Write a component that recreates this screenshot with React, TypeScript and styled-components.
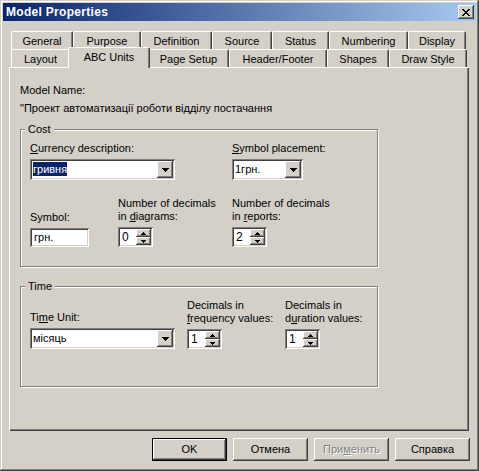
import React from 'react';
import styled, { createGlobalStyle } from 'styled-components';

const face = '#d4d0c8';
const light = '#ffffff';
const shadow = '#808080';
const dark = '#404040';

const raised = `box-shadow: inset -1px -1px ${dark}, inset 1px 1px ${light}, inset -2px -2px ${shadow}, inset 2px 2px ${face};`;
const sunken = `box-shadow: inset 1px 1px ${shadow}, inset -1px -1px ${light}, inset 2px 2px ${dark}, inset -2px -2px ${face};`;

const GlobalStyle = createGlobalStyle`
	body {
		margin: 0;
		background: ${face};
		font-family: 'Liberation Sans', Arial, sans-serif;
		font-size: 11px;
		color: #000;
	}
	* {
		box-sizing: border-box;
	}
`;

const rowOne = [
	{ label: 'General', width: 62 },
	{ label: 'Purpose', width: 68 },
	{ label: 'Definition', width: 71 },
	{ label: 'Source', width: 60 },
	{ label: 'Status', width: 57 },
	{ label: 'Numbering', width: 79 },
	{ label: 'Display', width: 58 },
];

const rowTwo = [
	{ label: 'Layout', width: 59 },
	{ label: 'ABC Units', width: 78, active: true },
	{ label: 'Page Setup', width: 81 },
	{ label: 'Header/Footer', width: 98 },
	{ label: 'Shapes', width: 62 },
	{ label: 'Draw Style', width: 78 },
];

function DownArrow() {
	return (
		<svg width="7" height="4" viewBox="0 0 7 4" shapeRendering="crispEdges">
			<path d="M0 0h7v1H0zM1 1h5v1H1zM2 2h3v1H2zM3 3h1v1H3z" fill="#000" />
		</svg>
	);
}

function SmallArrow({ up }: { up?: boolean }) {
	return (
		<svg width="5" height="3" viewBox="0 0 5 3" shapeRendering="crispEdges">
			{up ? (
				<path d="M2 0h1v1H2zM1 1h3v1H1zM0 2h5v1H0z" fill="#000" />
			) : (
				<path d="M0 0h5v1H0zM1 1h3v1H1zM2 2h1v1H2z" fill="#000" />
			)}
		</svg>
	);
}

function CloseGlyph() {
	return (
		<svg width="8" height="7" viewBox="0 0 8 7" shapeRendering="crispEdges">
			<path
				d="M0 0h2v1H0zM6 0h2v1H6zM1 1h2v1H1zM5 1h2v1H5zM2 2h4v1H2zM3 3h2v1H3zM2 4h4v1H2zM1 5h2v1H1zM5 5h2v1H5zM0 6h2v1H0zM6 6h2v1H6z"
				fill="#000"
			/>
		</svg>
	);
}

function ComboBox({ width, value, selected }: { width: number; value: string; selected?: boolean }) {
	return (
		<StyledCombo $width={width}>
			<ComboText>{selected ? <Selection>{value}</Selection> : value}</ComboText>
			<DropButton>
				<DownArrow />
			</DropButton>
		</StyledCombo>
	);
}

function SpinBox({ value }: { value: string }) {
	return (
		<StyledSpin>
			<SpinText>{value}</SpinText>
			<SpinButtons>
				<SpinButton>
					<SmallArrow up />
				</SpinButton>
				<SpinButton>
					<SmallArrow />
				</SpinButton>
			</SpinButtons>
		</StyledSpin>
	);
}

export default function App() {
	return (
		<>
			<GlobalStyle />
			<Window>
				<TitleBar>
					<TitleText>Model Properties</TitleText>
					<CloseButton>
						<CloseGlyph />
					</CloseButton>
				</TitleBar>
				<Body>
					<TabRow>
						{rowOne.map((t) => (
							<Tab key={t.label} $width={t.width}>
								{t.label}
							</Tab>
						))}
					</TabRow>
					<TabRow>
						{rowTwo.map((t) =>
							t.active ? (
								<ActiveTab key={t.label} $width={t.width + 4}>
									{t.label}
								</ActiveTab>
							) : (
								<Tab key={t.label} $width={t.width}>
									{t.label}
								</Tab>
							)
						)}
					</TabRow>
					<Panel>
						<Label>Model Name:</Label>
						<ModelValue>"Проект автоматизації роботи відділу постачання</ModelValue>
						<Group $height={138} $top={14}>
							<Legend>Cost</Legend>
							<Row>
								<Field $width={202}>
									<Label>
										<u>C</u>urrency description:
									</Label>
									<ComboBox width={145} value="гривня" selected />
								</Field>
								<Field>
									<Label>
										<u>S</u>ymbol placement:
									</Label>
									<ComboBox width={71} value="1грн." />
								</Field>
							</Row>
							<Row $top={17}>
								<Field $width={88}>
									<Label>Symbol:</Label>
									<Edit $width={59}>грн.</Edit>
								</Field>
								<Field $width={114}>
									<Label>
										Number of decimals
										<br />
										in <u>d</u>iagrams:
									</Label>
									<SpinBox value="0" />
								</Field>
								<Field>
									<Label>
										Number of decimals
										<br />
										in <u>r</u>eports:
									</Label>
									<SpinBox value="2" />
								</Field>
							</Row>
						</Group>
						<Group $height={101} $top={19}>
							<Legend>Time</Legend>
							<Row>
								<Field $width={157}>
									<Label>
										Ti<u>m</u>e Unit:
									</Label>
									<ComboBox width={145} value="місяць" />
								</Field>
								<Field $width={98}>
									<Label>
										Decimals in
										<br />
										<u>f</u>requency values:
									</Label>
									<SpinBox value="1" />
								</Field>
								<Field>
									<Label>
										Decimals in
										<br />
										d<u>u</u>ration values:
									</Label>
									<SpinBox value="1" />
								</Field>
							</Row>
						</Group>
					</Panel>
					<ButtonBar>
						<Button $default>OK</Button>
						<Button>Отмена</Button>
						<Button $disabled>
							При<u>м</u>енить
						</Button>
						<Button>Справка</Button>
					</ButtonBar>
				</Body>
			</Window>
		</>
	);
}

const Window = styled.div`
	width: 479px;
	height: 471px;
	padding: 3px;
	background: ${face};
	display: flex;
	flex-direction: column;
	box-shadow: inset -1px -1px ${dark}, inset 1px 1px ${face}, inset -2px -2px ${shadow}, inset 2px 2px ${light};
`;

const TitleBar = styled.div`
	height: 18px;
	display: flex;
	align-items: center;
	justify-content: space-between;
	padding: 0 2px 0 3px;
	background: linear-gradient(to right, #0a246a, #a6caf0);
`;

const TitleText = styled.span`
	color: #fff;
	font-weight: bold;
	font-size: 12px;
	letter-spacing: 0.3px;
	line-height: 14px;
`;

const CloseButton = styled.div`
	width: 16px;
	height: 14px;
	background: ${face};
	display: flex;
	align-items: center;
	justify-content: center;
	padding-right: 1px;
	${raised}
`;

const Body = styled.div`
	flex: 1;
	padding: 10px 7px 0 6px;
	display: flex;
	flex-direction: column;
`;

const TabRow = styled.div`
	height: 18px;
	display: flex;
	align-items: flex-start;
	padding-left: 2px;
`;

const Tab = styled.div<{ $width: number }>`
	width: ${({ $width }) => $width}px;
	height: 18px;
	flex: none;
	display: flex;
	justify-content: center;
	padding-top: 3px;
	line-height: 13px;
	background: ${face};
	border-top: 1px solid ${light};
	border-left: 1px solid ${light};
	border-right: 1px solid ${dark};
	border-radius: 2px 2px 0 0;
	box-shadow: inset -1px 0 ${shadow};
	white-space: nowrap;
`;

const ActiveTab = styled(Tab)`
	position: relative;
	z-index: 2;
	height: 21px;
	margin: -2px -2px -1px;
	padding-top: 3px;
`;

const Panel = styled.div`
	height: 364px;
	padding: 17px 0 0 11px;
	background: ${face};
	box-shadow: inset 1px 1px ${light}, inset -1px -1px ${dark}, inset -2px -2px ${shadow};
`;

const Label = styled.div`
	line-height: 13px;
	white-space: nowrap;
`;

const ModelValue = styled(Label)`
	margin-top: 5px;
`;

const Group = styled.div<{ $height: number; $top: number }>`
	position: relative;
	width: 358px;
	height: ${({ $height }) => $height}px;
	margin-top: ${({ $top }) => $top}px;
	padding: 12px 0 0 9px;
	border: 1px solid ${shadow};
	box-shadow: 1px 1px 0 ${light}, inset 1px 1px 0 ${light};
`;

const Legend = styled.span`
	position: absolute;
	top: -7px;
	left: 4px;
	padding: 0 3px;
	line-height: 13px;
	background: ${face};
`;

const Row = styled.div<{ $top?: number }>`
	display: flex;
	align-items: flex-end;
	margin-top: ${({ $top }) => $top ?? 0}px;
`;

const Field = styled.div<{ $width?: number }>`
	display: flex;
	flex-direction: column;
	align-items: flex-start;
	gap: 4px;
	${({ $width }) => ($width ? `width: ${$width}px; flex: none;` : 'flex: 1;')}
`;

const StyledCombo = styled.div<{ $width: number }>`
	width: ${({ $width }) => $width}px;
	height: 21px;
	padding: 2px;
	display: flex;
	align-items: center;
	background: #fff;
	${sunken}
`;

const ComboText = styled.div`
	flex: 1;
	padding-left: 1px;
	line-height: 13px;
	white-space: nowrap;
`;

const Selection = styled.span`
	background: #0a246a;
	color: #fff;
	padding: 1px 0;
`;

const DropButton = styled.div`
	width: 16px;
	height: 17px;
	display: flex;
	align-items: center;
	justify-content: center;
	background: ${face};
	${raised}
`;

const Edit = styled.div<{ $width: number }>`
	width: ${({ $width }) => $width}px;
	height: 19px;
	padding: 3px 0 0 4px;
	line-height: 13px;
	background: #fff;
	${sunken}
`;

const StyledSpin = styled.div`
	width: 35px;
	height: 20px;
	padding: 2px;
	display: flex;
	background: #fff;
	${sunken}
`;

const SpinText = styled.div`
	flex: 1;
	padding: 2px 0 0 2px;
	font-size: 12px;
	line-height: 13px;
`;

const SpinButtons = styled.div`
	width: 15px;
	display: flex;
	flex-direction: column;
`;

const SpinButton = styled.div`
	flex: 1;
	display: flex;
	align-items: center;
	justify-content: center;
	background: ${face};
	${raised}
`;

const ButtonBar = styled.div`
	display: flex;
	justify-content: flex-end;
	gap: 6px;
	margin: 7px -1px 0 0;
`;

const Button = styled.div<{ $default?: boolean; $disabled?: boolean }>`
	width: 75px;
	height: 23px;
	display: flex;
	align-items: center;
	justify-content: center;
	background: ${face};
	line-height: 13px;
	color: ${({ $disabled }) => ($disabled ? shadow : '#000')};
	text-shadow: ${({ $disabled }) => ($disabled ? `1px 1px 0 ${light}` : 'none')};
	${({ $default }) =>
		$default
			? `border: 1px solid #000; box-shadow: inset -1px -1px ${dark}, inset 1px 1px ${light}, inset -2px -2px ${shadow}, inset 2px 2px ${face};`
			: raised}
`;
